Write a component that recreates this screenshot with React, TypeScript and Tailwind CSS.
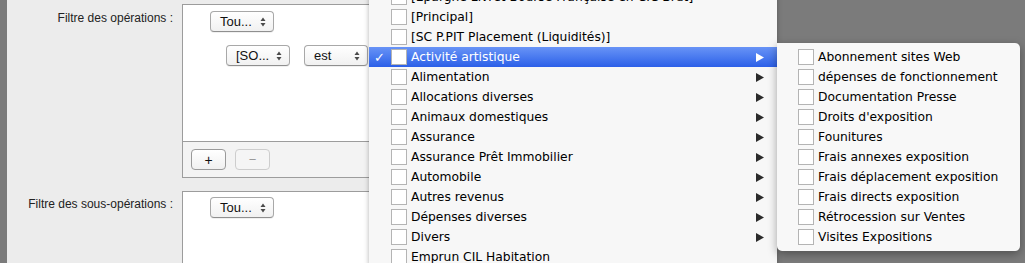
import React from 'react';

const mainItems = [
  '[Épargne Livret Bourse Française en CIC Brut]',
  '[Principal]',
  '[SC P.PIT Placement (Liquidités)]',
  'Activité artistique',
  'Alimentation',
  'Allocations diverses',
  'Animaux domestiques',
  'Assurance',
  'Assurance Prêt Immobilier',
  'Automobile',
  'Autres revenus',
  'Dépenses diverses',
  'Divers',
  'Emprun CIL Habitation',
];

const withArrow = new Set([
  'Activité artistique',
  'Alimentation',
  'Allocations diverses',
  'Animaux domestiques',
  'Assurance',
  'Assurance Prêt Immobilier',
  'Automobile',
  'Autres revenus',
  'Dépenses diverses',
  'Divers',
]);

const subItems = [
  'Abonnement sites Web',
  'dépenses de fonctionnement',
  'Documentation Presse',
  "Droits d'exposition",
  'Founitures',
  'Frais annexes exposition',
  'Frais déplacement exposition',
  'Frais directs exposition',
  'Rétrocession sur Ventes',
  'Visites Expositions',
];

const menuFont = { fontFamily: '"DejaVu Sans", Verdana, sans-serif' };

function Stepper() {
  return (
    <svg width="6" height="10" viewBox="0 0 6 10" className="shrink-0">
      <polygon points="3,0.5 5.5,4 0.5,4" fill="#4a4a4a" />
      <polygon points="0.5,6 5.5,6 3,9.5" fill="#4a4a4a" />
    </svg>
  );
}

function PopUp({ label }: { label: string }) {
  return (
    <div className="w-[64px] h-[21px] flex items-center justify-between pl-[9px] pr-[7px] rounded-[4px] border border-[#a8a8a8] border-b-[#8f8f8f] bg-linear-to-b from-white to-[#f1f1f1] shadow-[0_1px_0_rgba(0,0,0,0.06)] text-[13px] text-[#111]">
      <span>{label}</span>
      <Stepper />
    </div>
  );
}

function Box() {
  return <div className="w-4 h-4 shrink-0 border border-[#b4b4b4] bg-white" />;
}

function Arrow({ white }: { white?: boolean }) {
  return (
    <svg width="8" height="9" viewBox="0 0 8 9" className="shrink-0">
      <polygon points="0,0 8,4.5 0,9" fill={white ? '#ffffff' : '#2b2b2b'} />
    </svg>
  );
}

function MainMenu() {
  return (
    <div
      className="absolute left-[369px] top-[-13px] w-[408px] bg-[#f7f7f7] shadow-[0_0_5px_rgba(0,0,0,0.3)] text-[12.3px]"
      style={menuFont}
    >
      {mainItems.map((item) => {
        const active = item === 'Activité artistique';
        return (
          <div
            key={item}
            className={`h-5 flex items-center pr-[13px] ${
              active ? 'bg-linear-to-b from-[#6893f6] to-[#2c5fe8] text-white' : 'text-black'
            }`}
          >
            <span className="w-[22px] pl-[5px] text-[13px] font-bold leading-none">{active ? '✓' : ''}</span>
            <Box />
            <span className="ml-[4px] flex-1 whitespace-nowrap">{item}</span>
            {withArrow.has(item) && <Arrow white={active} />}
          </div>
        );
      })}
    </div>
  );
}

function SubMenu() {
  return (
    <div
      className="absolute left-[777px] top-[43px] w-[243px] h-[208px] pt-[4px] bg-[#f8f8f8] rounded-r-[5px] rounded-bl-[5px] shadow-[0_3px_10px_rgba(0,0,0,0.35)] text-[12.3px] text-black"
      style={menuFont}
    >
      {subItems.map((item) => (
        <div key={item} className="h-5 flex items-center pl-[21px]">
          <Box />
          <span className="ml-[4px] whitespace-nowrap">{item}</span>
        </div>
      ))}
    </div>
  );
}

export default function App() {
  return (
    <div
      className="relative w-[1025px] h-[263px] overflow-hidden bg-[#7b7b7b]"
      style={{ fontFamily: '"Liberation Sans", Arial, sans-serif' }}
    >
      <div className="ml-[7px] w-[770px] h-full bg-[#ececec] pt-[4px]">
        <div className="grid grid-cols-[166px_1fr] gap-x-[9px]">
          <div className="text-right text-[12px] text-[#222] pt-[5px]">Filtre des opérations :</div>
          <div className="h-[174px] border border-[#9c9c9c] bg-white flex flex-col">
            <div className="flex-1 pl-[27px] pt-[6px]">
              <PopUp label="Tou..." />
              <div className="flex gap-[14px] mt-[13px] ml-[16px]">
                <PopUp label="[SO..." />
                <PopUp label="est" />
              </div>
            </div>
            <div className="h-[36px] border-t border-[#9c9c9c] bg-[#f3f3f3] flex items-start gap-[9px] pl-[8px] pt-[7px]">
              <div className="w-[35px] h-[21px] rounded-[4px] border border-[#9a9a9a] bg-linear-to-b from-white to-[#f0f0f0] flex items-center justify-center text-[14px] text-[#111] leading-none">
                +
              </div>
              <div className="w-[35px] h-[21px] rounded-[4px] border border-[#cdcdcd] bg-[#f5f5f5] flex items-center justify-center text-[13px] text-[#9a9a9a] leading-none">
                −
              </div>
            </div>
          </div>

          <div className="text-right text-[12px] text-[#222] pt-[4px] mt-[13px]">Filtre des sous-opérations :</div>
          <div className="mt-[13px] h-[100px] border border-[#9c9c9c] bg-white pl-[27px] pt-[5px]">
            <PopUp label="Tou..." />
          </div>
        </div>
      </div>

      <MainMenu />
      <SubMenu />
    </div>
  );
}
